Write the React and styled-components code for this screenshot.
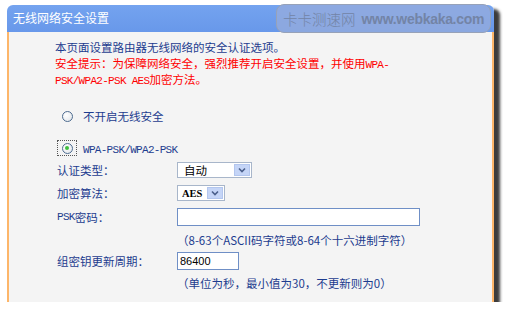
import React from "react";
import styled, { createGlobalStyle } from "styled-components";

const GlobalStyle = createGlobalStyle`
  body {
    margin: 0;
    background: #ffffff;
    font-family: "Noto Sans CJK SC", "Liberation Sans", sans-serif;
  }
`;

const BLUE = "#1d3c8f";
const ORANGE = "#fdb66a";

const Page = styled.div`
  padding: 5px 0 0 7px;
`;

const Panel = styled.div`
  position: relative;
  width: 487px;
  height: 297px;
  display: flex;
  flex-direction: column;
  border-radius: 6px 6px 0 0;
  box-shadow: 6px 4px 3px rgba(50, 50, 50, 0.95);
`;

const Header = styled.div`
  height: 27px;
  display: flex;
  align-items: center;
  padding: 0 0 3px 6px;
  box-sizing: border-box;
  background: linear-gradient(#74a3ef, #6898ea);
  border-radius: 6px 6px 0 0;
  color: #ffffff;
  font-size: 12px;
`;

const Watermark = styled.div`
  position: absolute;
  left: 269px;
  top: -1px;
  width: 215px;
  height: 29px;
  box-sizing: border-box;
  border: 1px solid #97a2b8;
  border-radius: 8px;
  background: rgba(146, 170, 222, 0.85);
  display: flex;
  align-items: center;
  padding-left: 6px;
  gap: 6px;
  color: #7384a6;
  white-space: nowrap;
`;

const MarkCn = styled.span`
  font-size: 14.5px;
  font-weight: 300;
`;

const MarkEn = styled.span`
  font-family: "Liberation Sans", sans-serif;
  font-size: 14px;
  letter-spacing: -0.3px;
  font-weight: bold;
`;

const Body = styled.div`
  flex: 1;
  background: #f4f4f4;
  border-left: 2px solid ${ORANGE};
  border-right: 2px solid ${ORANGE};
  padding: 7px 0 0 46px;
  font-size: 11.5px;
  color: ${BLUE};
`;

const Line = styled.div`
  line-height: 16px;
  height: 16px;
  white-space: nowrap;
  color: ${(p) => (p.$warn ? "#ff0000" : BLUE)};
`;

const Mono = styled.span`
  font-family: "Liberation Mono", monospace;
  font-size: 11px;
  letter-spacing: -0.7px;
`;

const RadioRow = styled.div`
  display: flex;
  align-items: center;
  height: 20px;
  margin: ${(p) => p.$top}px 0 0 2px;
`;

const FocusBox = styled.div`
  width: 20px;
  height: 16px;
  box-sizing: border-box;
  border: 1px dotted ${(p) => (p.$focus ? "#555555" : "transparent")};
  display: flex;
  align-items: center;
  justify-content: center;
`;

const Circle = styled.div`
  width: 11px;
  height: 11px;
  box-sizing: border-box;
  border-radius: 50%;
  border: 1px solid #4d6b8f;
  background: radial-gradient(circle at 35% 35%, #ffffff, #dfe3e8);
  display: flex;
  align-items: center;
  justify-content: center;
`;

const Dot = styled.div`
  width: 4px;
  height: 4px;
  border-radius: 50%;
  background: #3fbf3f;
`;

const RadioLabel = styled.span`
  margin-left: 6px;
`;

const Form = styled.div`
  display: grid;
  grid-template-columns: 122px 1fr;
  grid-template-rows: 23px 24px 24px 22px 20px 24px;
`;

const Cell = styled.div`
  display: flex;
  align-items: center;
  padding-left: ${(p) => (p.$label ? 2 : 0)}px;
  grid-column: ${(p) => (p.$wide ? 2 : "auto")};
  white-space: nowrap;
`;

const Select = styled.div`
  width: ${(p) => p.$w}px;
  height: 16px;
  box-sizing: border-box;
  border: 1px solid #a8b6ca;
  background: #ffffff;
  display: flex;
  align-items: center;
  color: #000000;
`;

const SelectText = styled.span`
  padding-left: ${(p) => (p.$latin ? 4 : 6)}px;
  font-size: ${(p) => (p.$latin ? "10.5px" : "11.5px")};
  font-family: ${(p) =>
    p.$latin ? '"Liberation Serif", serif' : "inherit"};
  font-weight: ${(p) => (p.$latin ? "bold" : "normal")};
`;

const DropButton = styled.div`
  margin-left: auto;
  margin-right: 1px;
  width: 16px;
  height: 12px;
  box-sizing: border-box;
  background: #c5d5f7;
  border: 1px solid #b3c6ee;
  display: flex;
  align-items: center;
  justify-content: center;
`;

const TextInput = styled.input`
  width: ${(p) => p.$w}px;
  height: 18px;
  box-sizing: border-box;
  border: 1px solid #6f8fc6;
  background: #ffffff;
  padding: 0 0 0 2px;
  margin: 0;
  font-family: "Liberation Sans", sans-serif;
  font-size: 11px;
  color: #000000;
  outline: none;
`;

const Chevron = () => (
  <svg width="8" height="6" viewBox="0 0 8 6">
    <path d="M1 1.5 L4 4.5 L7 1.5" fill="none" stroke="#4a5f8a" strokeWidth="1.6" />
  </svg>
);

const FakeSelect = ({ w, children, latin }) => (
  <Select $w={w}>
    <SelectText $latin={latin}>{children}</SelectText>
    <DropButton>
      <Chevron />
    </DropButton>
  </Select>
);

const Radio = ({ checked, focus, top, children }) => (
  <RadioRow $top={top}>
    <FocusBox $focus={focus}>
      <Circle>{checked && <Dot />}</Circle>
    </FocusBox>
    <RadioLabel>{children}</RadioLabel>
  </RadioRow>
);

export default function App() {
  return (
    <Page>
      <GlobalStyle />
      <Panel>
        <Header>无线网络安全设置</Header>
        <Watermark>
          <MarkCn>卡卡测速网</MarkCn>
          <MarkEn>www.webkaka.com</MarkEn>
        </Watermark>
        <Body>
          <Line>本页面设置路由器无线网络的安全认证选项。</Line>
          <Line $warn>
            安全提示：为保障网络安全，强烈推荐开启安全设置，并使用<Mono>WPA-</Mono>
          </Line>
          <Line $warn>
            <Mono>PSK/WPA2-PSK AES</Mono>加密方法。
          </Line>
          <Radio top={19}>不开启无线安全</Radio>
          <Radio top={12} checked focus>
            <Mono>WPA-PSK/WPA2-PSK</Mono>
          </Radio>
          <Form>
            <Cell $label>认证类型：</Cell>
            <Cell>
              <FakeSelect w={75}>自动</FakeSelect>
            </Cell>
            <Cell $label>加密算法：</Cell>
            <Cell>
              <FakeSelect w={48} latin>
                AES
              </FakeSelect>
            </Cell>
            <Cell $label>
              <Mono>PSK</Mono>密码：
            </Cell>
            <Cell>
              <TextInput $w={243} defaultValue="" />
            </Cell>
            <Cell $wide>（8-63个ASCII码字符或8-64个十六进制字符）</Cell>
            <Cell $label>组密钥更新周期：</Cell>
            <Cell>
              <TextInput $w={62} defaultValue="86400" />
            </Cell>
            <Cell $wide>（单位为秒，最小值为30，不更新则为0）</Cell>
          </Form>
        </Body>
      </Panel>
    </Page>
  );
}
